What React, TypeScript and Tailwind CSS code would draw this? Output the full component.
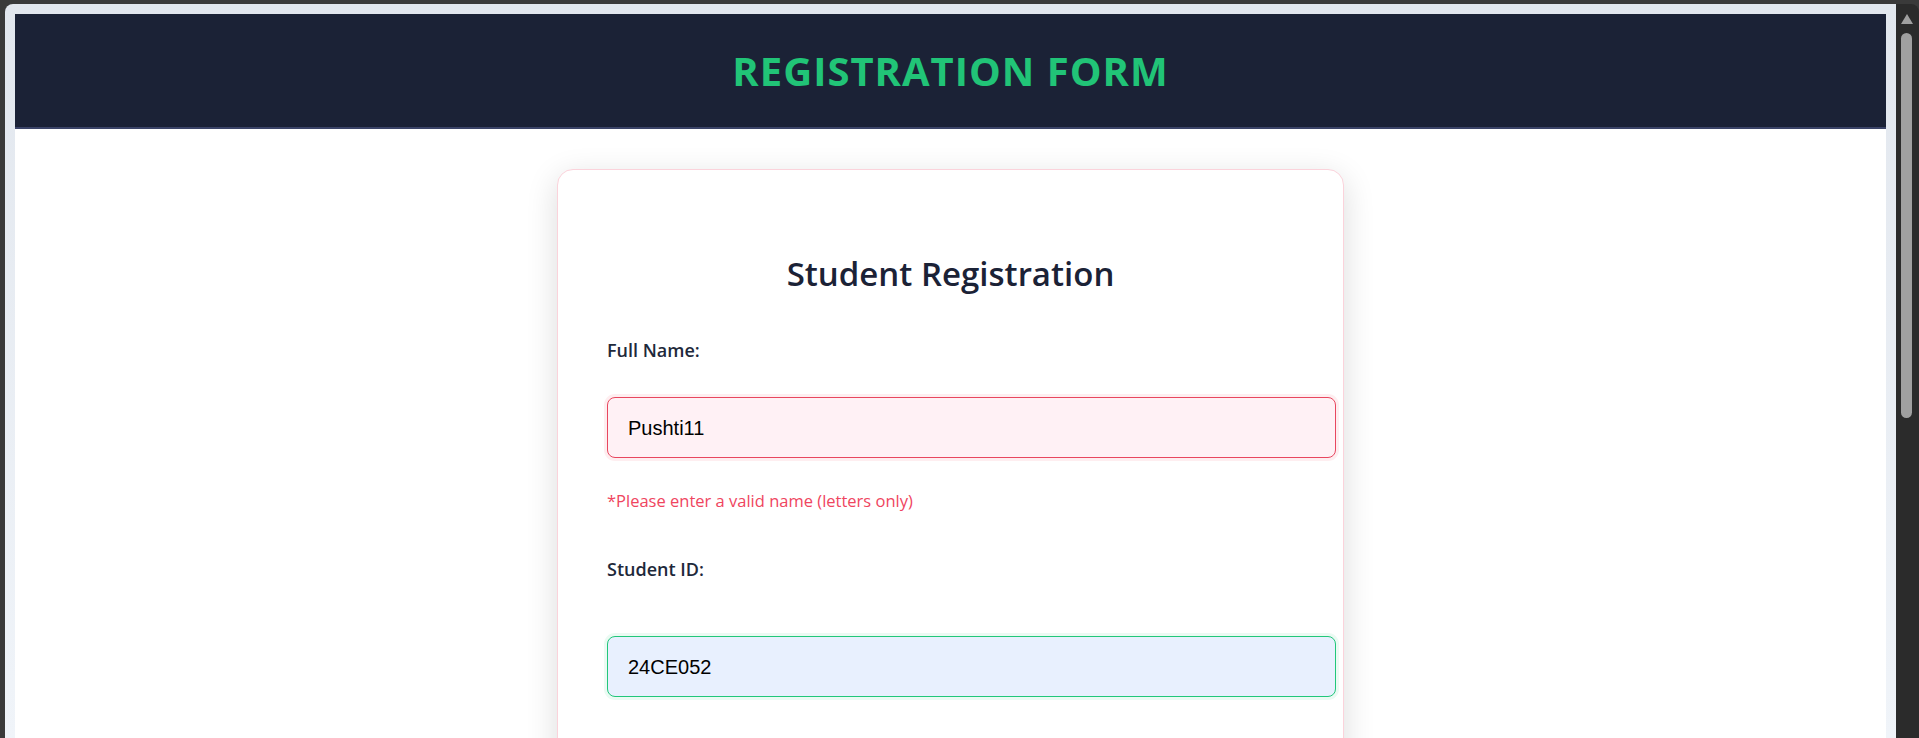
import React from "react";

export default function App() {
  return (
    <div className="w-[1919px] h-[738px] overflow-hidden bg-[#3a3a3a] flex pt-[4px] pl-[5px] font-['Open_Sans',sans-serif]">
      <div className="w-[1891px] h-[734px] flex flex-col rounded-tl-[8px] bg-gradient-to-b from-[#e2e7ee] to-[#f0f4f9] pt-[10px] px-[10px]">
        <header className="h-[115px] shrink-0 bg-[#1b2236] border-b-2 border-[#3b4468] flex items-center justify-center">
          <h1 className="text-[40px] leading-[48px] font-bold tracking-[1px] text-[#21c477]">
            REGISTRATION FORM
          </h1>
        </header>
        <main className="flex-1 bg-white overflow-hidden">
          <div className="mt-[40px] mx-auto w-[787px] h-[620px] rounded-[16px] border border-[#fbd3db] bg-white shadow-[0_8px_32px_rgba(0,0,0,0.14)] pl-[49px] pt-[84px]">
            <h2 className="w-[729px] text-center text-[33px] leading-[40px] font-semibold text-[#1b2236] -ml-[21px]">
              Student Registration
            </h2>
            <label className="block mt-[44px] text-[18px] leading-[24px] font-semibold text-[#1e293b]">
              Full Name:
            </label>
            <div className="mt-[35px] w-[729px] h-[61px] rounded-[8px] border-[1.5px] border-[#e8475f] bg-[#fff1f5] shadow-[0_0_0_3px_rgba(244,63,94,0.09)] flex items-center pl-[20px] font-['Liberation_Sans',Arial,sans-serif] text-[20px] text-black">
              Pushti11
            </div>
            <p className="mt-[32px] text-[16.5px] leading-[21px] font-medium text-[#ef4560]">
              *Please enter a valid name (letters only)
            </p>
            <label className="block mt-[46px] text-[18px] leading-[24px] font-semibold text-[#1e293b]">
              Student ID:
            </label>
            <div className="mt-[55px] w-[729px] h-[61px] rounded-[8px] border-[1.5px] border-[#22c77a] bg-[#e8f0fe] shadow-[0_0_0_3px_rgba(34,199,122,0.09)] flex items-center pl-[20px] font-['Liberation_Sans',Arial,sans-serif] text-[20px] text-black">
              24CE052
            </div>
          </div>
        </main>
      </div>
      <div className="w-[23px] h-[734px] bg-[#2b2b2b] rounded-tr-[8px] flex flex-col items-center pt-[10px]">
        <svg width="12" height="10" viewBox="0 0 12 10" className="ml-[-2px]">
          <polygon points="6,0 12,10 0,10" fill="#a0a0a0" />
        </svg>
        <div className="mt-[9px] ml-[-2px] w-[11px] h-[385px] rounded-full bg-[#a0a0a0]" />
      </div>
    </div>
  );
}
